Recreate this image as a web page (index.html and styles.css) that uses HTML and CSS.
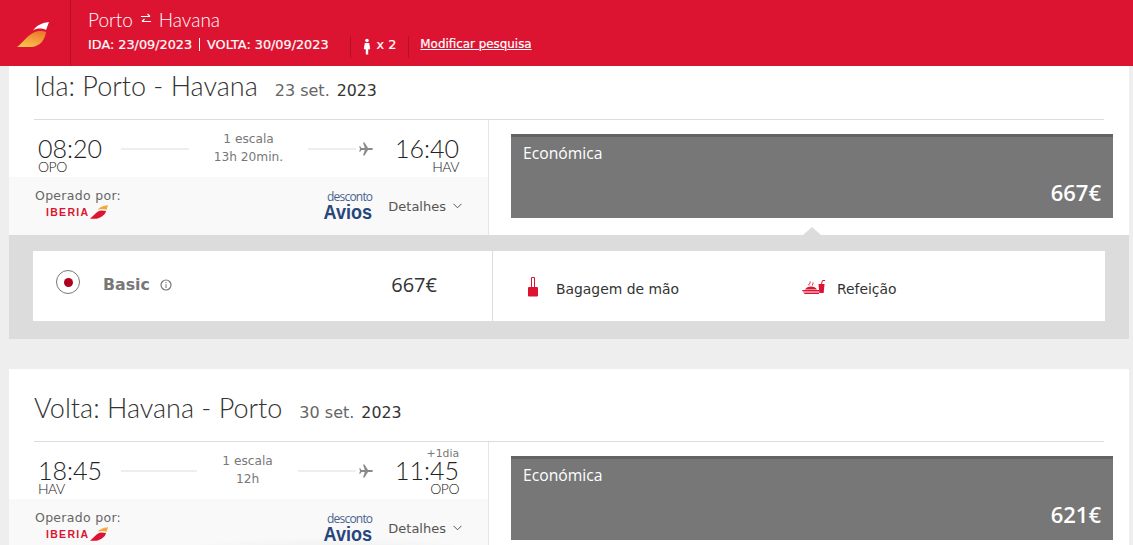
FILE: index.html
```html
<!DOCTYPE html>
<html lang="pt">
<head>
    <meta charset="UTF-8">
    <meta name="viewport" content="width=device-width, initial-scale=1.0">
    <title>Iberia - Porto Havana</title>
    <link rel="stylesheet" href="styles.css">
</head>
<body>
    <div class="topbar">
        <div class="topbar-logo">
            <svg width="32" height="26" viewBox="0 0 32 26">
                <defs>
                    <linearGradient id="wing" x1="0.300" y1="1" x2="0.700" y2="0">
                        <stop offset="0" stop-color="#fbc14c"/>
                        <stop offset="1" stop-color="#ec7a2c"/>
                    </linearGradient>
                </defs>
                <path d="M0 25 C7 20 12 10 22 9 C25 9 28 9 29 10 C28 18 23 24 15 25 Z" fill="url(#wing)"/>
                <path d="M16 8.500 C19 4 24 1 32 0 C31 3 30 5 29 8 C25 6 20 6 16 8.500 Z" fill="#fff"/>
            </svg>
        </div>
        <div class="topbar-info">
            <div class="route">
                <span>Porto</span>
                <svg class="swap" width="12" height="12" viewBox="0 0 12 12">
                    <path d="M1 3.500H10M7.500 1L10 3.500M11 8.500H2M4.500 6L2 8.500" fill="none" stroke="#fff" stroke-width="1.200"/>
                </svg>
                <span>Havana</span>
            </div>
            <div class="search-info">
                <span>IDA: 23/09/2023</span>
                <span class="pipe"></span>
                <span>VOLTA: 30/09/2023</span>
                <span class="sep sep-first"></span>
                <svg class="person" width="8" height="17" viewBox="0 0 8 16">
                    <circle cx="4" cy="2" r="1.800" fill="#fff"/>
                    <path d="M1.800 4.500H6.200L7.200 10.500L5.200 11V16H2.800V11L0.800 10.500Z" fill="#fff"/>
                </svg>
                <span class="pax">x 2</span>
                <span class="sep sep-second"></span>
                <a href="#" class="modify">Modificar pesquisa</a>
            </div>
        </div>
    </div>

    <div class="page">
        <!-- Ida -->
        <div class="card card-first">
            <div class="card-title">
                <h2>Ida: Porto - Havana</h2>
                <span class="day">23 set.</span>
                <span class="year">2023</span>
            </div>
            <div class="flight">
                <div class="flight-left">
                    <div class="times">
                        <div class="stop">
                            <div class="hour">08:20</div>
                            <div class="code">OPO</div>
                        </div>
                        <div class="middle">
                            <span class="track track-a"></span>
                            <div class="stops"><div>1 escala</div><div>13h 20min.</div></div>
                            <span class="track track-b"></span>
                            <svg class="plane" width="14" height="14" viewBox="0 0 14 14">
                                <path d="M14 7C14 6.300 13 6 12 6H9L5.500 0.500H4L5.800 6H2.500L1.200 4.300H0.200L1 7L0.200 9.700H1.200L2.500 8H5.800L4 13.500H5.500L9 8H12C13 8 14 7.700 14 7Z" fill="#8a8a8a"/>
                            </svg>
                        </div>
                        <div class="stop stop-end">
                            <div class="hour">16:40</div>
                            <div class="code">HAV</div>
                        </div>
                    </div>
                    <div class="extras">
                        <div class="operator">
                            <div>Operado por:</div>
                            <div class="iberia">
                                <span>IBERIA</span>
                                <svg width="18" height="14" viewBox="0 0 19 14">
                                    <path d="M0 14C4 11 7 6 12 5.500L17 6C16 10 12 13 7 14Z" fill="#dc1431"/>
                                    <path d="M8 4.500C10 2 14 0.500 19 0L17.500 4.500C14 3.500 11 3.500 8 4.500Z" fill="#f3a83b"/>
                                </svg>
                            </div>
                        </div>
                        <div class="avios"><span class="avios-top">desconto</span><span class="avios-name">Avios</span></div>
                        <div class="details">
                            <span>Detalhes</span>
                            <svg width="9" height="6" viewBox="0 0 9 6"><path d="M0.500 0.800L4.500 4.800L8.500 0.800" fill="none" stroke="#555" stroke-width="1"/></svg>
                        </div>
                    </div>
                </div>
                <div class="flight-right">
                    <div class="fare">
                        <div class="fare-name">Económica</div>
                        <div class="fare-price">667€</div>
                    </div>
                </div>
            </div>
            <div class="options">
                <div class="options-row">
                    <div class="option-main">
                        <span class="radio"><span class="radio-dot"></span></span>
                        <span class="option-name">Basic</span>
                        <svg class="info" width="12" height="12" viewBox="0 0 12 12">
                            <circle cx="6" cy="6" r="5" fill="none" stroke="#777" stroke-width="1.200"/>
                            <path d="M6 5.200V9M6 3V4.200" stroke="#777" stroke-width="1"/>
                        </svg>
                        <span class="option-price">667€</span>
                    </div>
                    <div class="option-perks">
                        <div class="perk perk-bag">
                            <svg class="bag" width="12" height="20" viewBox="0 0 12 20">
                                <path d="M4.500 11V0.500H7.500V11" fill="none" stroke="#dc1431" stroke-width="1"/>
                                <rect x="1" y="10" width="10" height="9.500" rx="1" fill="#dc1431"/>
                            </svg>
                            <span>Bagagem de mão</span>
                        </div>
                        <div class="perk">
                            <svg class="meal" width="24" height="14" viewBox="0 0 24 14">
                                <path d="M1 12.500H17V14H3ZM0 10H17V11.500H1ZM3 9.500C4 7.500 6.500 6.500 9 6.500C11.500 6.500 14 7.500 15 9.500Z" fill="#dc1431"/>
                                <path d="M7 5.500C6 4 9 3.500 8 1.500M10.500 5.500C10 4.500 11.500 3.500 11 2.500" fill="none" stroke="#dc1431" stroke-width="1"/>
                                <path d="M16.500 4H22.500L21.700 13H17.300Z" fill="#dc1431"/>
                                <path d="M19.500 4L20.500 0.500H23" fill="none" stroke="#dc1431" stroke-width="1"/>
                            </svg>
                            <span>Refeição</span>
                        </div>
                    </div>
                </div>
            </div>
        </div>

        <!-- Volta -->
        <div class="card card-second">
            <div class="card-title">
                <h2>Volta: Havana - Porto</h2>
                <span class="day">30 set.</span>
                <span class="year">2023</span>
            </div>
            <div class="flight">
                <div class="flight-left">
                    <div class="times">
                        <div class="stop">
                            <div class="hour">18:45</div>
                            <div class="code">HAV</div>
                        </div>
                        <div class="middle">
                            <span class="track track-c"></span>
                            <div class="stops"><div>1 escala</div><div>12h</div></div>
                            <span class="track track-d"></span>
                            <svg class="plane" width="14" height="14" viewBox="0 0 14 14">
                                <path d="M14 7C14 6.300 13 6 12 6H9L5.500 0.500H4L5.800 6H2.500L1.200 4.300H0.200L1 7L0.200 9.700H1.200L2.500 8H5.800L4 13.500H5.500L9 8H12C13 8 14 7.700 14 7Z" fill="#8a8a8a"/>
                            </svg>
                        </div>
                        <div class="stop stop-end">
                            <div class="next-day">+1dia</div>
                            <div class="hour">11:45</div>
                            <div class="code">OPO</div>
                        </div>
                    </div>
                    <div class="extras">
                        <div class="operator">
                            <div>Operado por:</div>
                            <div class="iberia">
                                <span>IBERIA</span>
                                <svg width="18" height="14" viewBox="0 0 19 14">
                                    <path d="M0 14C4 11 7 6 12 5.500L17 6C16 10 12 13 7 14Z" fill="#dc1431"/>
                                    <path d="M8 4.500C10 2 14 0.500 19 0L17.500 4.500C14 3.500 11 3.500 8 4.500Z" fill="#f3a83b"/>
                                </svg>
                            </div>
                        </div>
                        <div class="avios"><span class="avios-top">desconto</span><span class="avios-name">Avios</span></div>
                        <div class="details">
                            <span>Detalhes</span>
                            <svg width="9" height="6" viewBox="0 0 9 6"><path d="M0.500 0.800L4.500 4.800L8.500 0.800" fill="none" stroke="#555" stroke-width="1"/></svg>
                        </div>
                    </div>
                </div>
                <div class="flight-right">
                    <div class="fare">
                        <div class="fare-name">Económica</div>
                        <div class="fare-price">621€</div>
                    </div>
                </div>
            </div>
        </div>
    </div>
</body>
</html>
```
FILE: styles.css
```css
html, body {
    height: 100%;
    overflow: hidden;
}
body {
    margin: 0;
    background: #eeeeee;
    color: #333;
    font-family: "DejaVu Sans", Verdana, sans-serif;
    font-size: 12px;
}
svg {
    display: block;
    flex: none;
}

/* Top bar */
.topbar {
    display: flex;
    height: 66px;
    background: #dc1431;
    color: white;
}
.topbar-logo {
    display: flex;
    align-items: center;
    justify-content: center;
    width: 71px;
    box-sizing: border-box;
    padding-top: 3px;
    padding-right: 4px;
    border-right: 1px solid #b01229;
}
.topbar-info {
    padding: 9px 0 0 17px;
}
.route {
    display: flex;
    align-items: center;
    gap: 7px;
    height: 21px;
    font-family: Lato, sans-serif;
    font-size: 19px;
    font-weight: 300;
}
.swap {
    margin-top: -2px;
}
.search-info {
    display: flex;
    align-items: center;
    height: 22px;
    margin-top: 3px;
    font-size: 12.800px;
    -webkit-text-stroke: 0.200px white;
}
.pipe {
    width: 1px;
    height: 13px;
    margin: 0 7px;
    background: white;
}
.sep {
    width: 1px;
    height: 22px;
    margin-top: 5px;
    background: #b01229;
}
.sep-first {
    margin-left: 21px;
    margin-right: 12px;
}
.sep-second {
    margin-left: 12px;
    margin-right: 11px;
}
.person {
    margin-top: 5px;
}
.pax {
    margin-left: 6px;
}
.modify {
    color: white;
    font-size: 11.900px;
}

/* Cards */
.page {
    padding: 0 4px 0 9px;
}
.card {
    background: white;
}
.card-first {
    margin-bottom: 30px;
}
.card-title {
    display: flex;
    align-items: baseline;
    height: 53px;
    margin: 0 25px;
    border-bottom: 1px solid #dcdcdc;
}
.card-second .card-title {
    padding-top: 19px;
}
.card-title h2 {
    margin: 0 17px 0 0;
    color: #333;
    font-family: Lato, sans-serif;
    font-size: 27px;
    font-weight: 300;
    line-height: 40px;
}
.day {
    color: #666;
    font-size: 16px;
    margin-right: 7px;
}
.year {
    color: #333;
    font-size: 15.800px;
}

/* Flight row */
.flight {
    display: flex;
    height: 115px;
}
.flight-left {
    display: flex;
    flex-direction: column;
    width: 480px;
    box-sizing: border-box;
    border-right: 1px solid #e6e6e6;
}
.times {
    display: flex;
    justify-content: space-between;
    flex: 1;
    margin: 0 29px 0 29px;
    padding-top: 17px;
    box-sizing: border-box;
    position: relative;
}
.stop {
    width: 64px;
}
.stop-end {
    text-align: right;
}
.hour {
    font-family: Lato, sans-serif;
    font-size: 25px;
    font-weight: 300;
    line-height: 22px;
    color: #222;
}
.code {
    font-family: Lato, sans-serif;
    font-size: 14px;
    font-weight: 300;
    line-height: 12px;
    letter-spacing: -0.500px;
    color: #222;
    margin-top: 2px;
}
.next-day {
    position: absolute;
    top: 6px;
    right: 0;
    color: #777;
    font-size: 10.800px;
    line-height: 11px;
}
.middle {
    flex: 1;
    display: flex;
    align-items: flex-start;
    margin: 0 0 0 19px;
    color: #777;
    font-size: 12.200px;
}
.stops {
    flex: 1;
    text-align: center;
    line-height: 18px;
    margin-top: -7px;
}
.track {
    height: 2px;
    margin-top: 11px;
    background: #eeeeee;
}
.track-a {
    width: 68px;
}
.track-b {
    width: 48px;
}
.track-c {
    width: 76px;
}
.track-d {
    width: 58px;
}
.plane {
    margin: 5px 22px 0 3px;
}
.extras {
    display: flex;
    align-items: center;
    height: 58px;
    padding: 0 26px 0 26px;
    background: #f9f9f9;
    color: #666;
}
.card-second .extras {
    background: radial-gradient(ellipse 190px 24px at 320px 62px, #e6e6e6, #f9f9f9);
}
.operator {
    flex: 1;
    font-size: 12.500px;
    letter-spacing: 0.300px;
    margin-top: -2px;
}
.operator > div:first-child {
    margin-top: -4px;
}
.iberia {
    display: flex;
    align-items: center;
    gap: 1px;
    margin: 2px 0 0 11px;
    color: #dc1431;
    font-family: "Liberation Sans", sans-serif;
    font-size: 10.500px;
    font-weight: 700;
    letter-spacing: 1.300px;
}
.avios {
    display: flex;
    flex-direction: column;
    align-items: flex-end;
    margin: -1px 16px 0 0;
    color: #27467a;
    font-family: "Liberation Sans", sans-serif;
}
.avios-top {
    font-family: "Open Sans", sans-serif;
    font-size: 12px;
    line-height: 12px;
    letter-spacing: -0.800px;
    color: #4a628f;
}
.avios-name {
    font-size: 20.500px;
    font-weight: 700;
    line-height: 18px;
    transform: scaleX(0.88);
    transform-origin: right center;
}
.details {
    display: flex;
    align-items: center;
    gap: 7px;
    color: #555;
    font-size: 13px;
}

/* Fare box */
.flight-right {
    flex: 1;
    padding: 14px 16px 0 22px;
}
.fare {
    display: flex;
    flex-direction: column;
    justify-content: space-between;
    height: 84px;
    box-sizing: border-box;
    padding: 5px 12px 11px;
    background: #777;
    border-top: 3px solid #636363;
    color: white;
    font-family: "Open Sans", sans-serif;
}
.fare-name {
    font-size: 15.700px;
    font-weight: 500;
}
.fare-price {
    align-self: flex-end;
    font-size: 22px;
    font-weight: 600;
}

/* Fare options */
.options {
    position: relative;
    padding: 16px 24px 18px;
    background: #dcdcdc;
}
.options::before {
    content: "";
    position: absolute;
    top: -8px;
    left: 794px;
    border-left: 9px solid transparent;
    border-right: 9px solid transparent;
    border-bottom: 8px solid #dcdcdc;
}
.options-row {
    display: flex;
    height: 70px;
    background: white;
}
.option-main {
    display: flex;
    align-items: center;
    width: 460px;
    box-sizing: border-box;
    padding: 0 0 4px 23px;
    border-right: 1px solid #dcdcdc;
}
.radio {
    display: flex;
    align-items: center;
    justify-content: center;
    width: 22px;
    height: 22px;
    margin: -4px 23px 0 0;
    border: 1px solid #777;
    border-radius: 50%;
}
.radio-dot {
    width: 9px;
    height: 9px;
    border-radius: 50%;
    background: #b0001f;
}
.option-name {
    margin-right: 10px;
    color: #777;
    font-size: 15.800px;
    font-weight: 700;
}
.info {
    margin-top: 2px;
}
.option-price {
    margin-left: auto;
    margin-right: 55px;
    margin-top: 1px;
    color: #333;
    font-family: "Open Sans", sans-serif;
    font-size: 20px;
}
.option-perks {
    display: flex;
    align-items: center;
    flex: 1;
    padding: 6px 0 0 34px;
    font-size: 13.900px;
}
.perk {
    display: flex;
    align-items: center;
    gap: 11px;
}
.perk-bag {
    width: 275px;
    gap: 17px;
}
.bag {
    margin-top: -4px;
}
.meal {
    margin-top: -4px;
}
```
